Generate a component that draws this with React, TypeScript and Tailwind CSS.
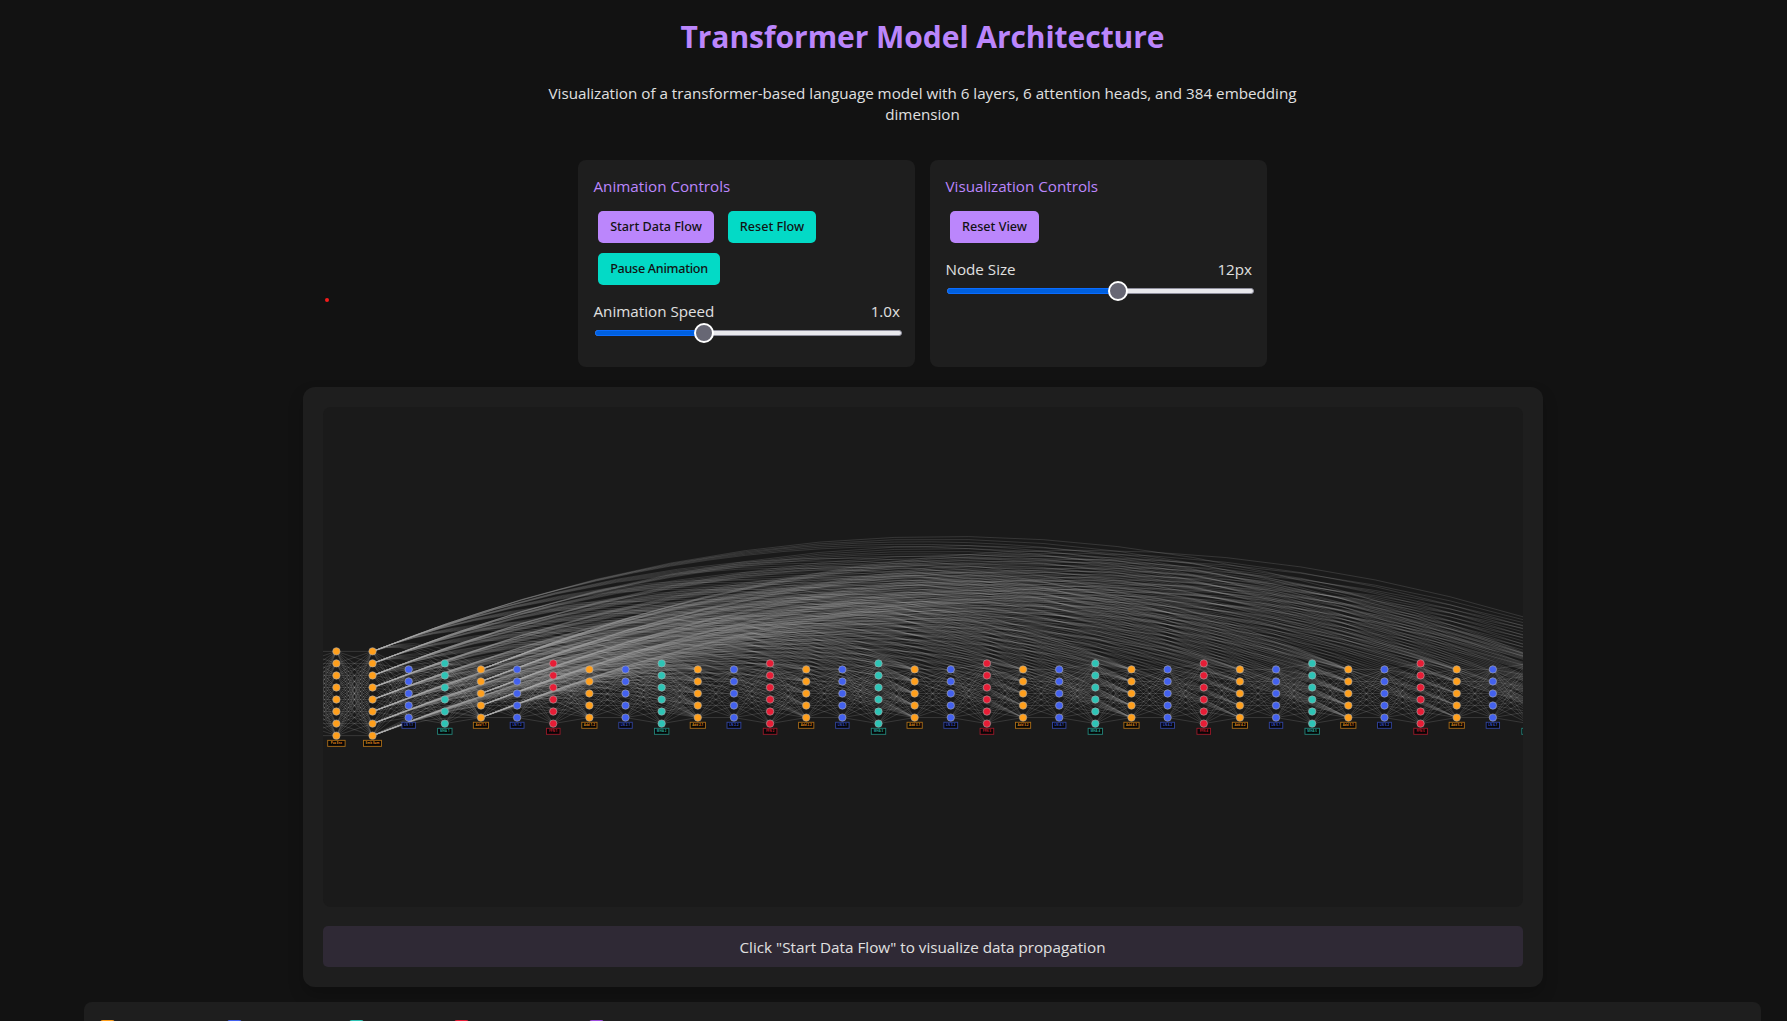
import React from "react";

type Kind = "embed" | "norm" | "attn" | "ffn";

interface Column {
  kind: Kind;
  label: string;
  count: number;
  x: number;
  boxWidth: number;
}

const COLORS: Record<Kind, string> = {
  embed: "#ff9f1c",
  norm: "#4361ee",
  attn: "#2ec4b6",
  ffn: "#e71d36",
};

const VIEW_WIDTH = 1200;
const STEP = 36.14;
const ROW = 12.04;
const CENTER = 286.5;
const ARC = 0.2;

function buildColumns(): Column[] {
  const cols: Omit<Column, "x">[] = [
    { kind: "embed", label: "Token Emb", count: 8, boxWidth: 19 },
    { kind: "embed", label: "Pos Enc", count: 8, boxWidth: 17.4 },
    { kind: "embed", label: "Emb Sum", count: 8, boxWidth: 18 },
  ];
  for (let n = 1; n <= 6; n++) {
    cols.push(
      { kind: "norm", label: `LN ${n}-1`, count: 5, boxWidth: 13.4 },
      { kind: "attn", label: `MHA ${n}`, count: 6, boxWidth: 14.4 },
      { kind: "embed", label: `Add ${n}-1`, count: 5, boxWidth: 15.2 },
      { kind: "norm", label: `LN ${n}-2`, count: 5, boxWidth: 13.8 },
      { kind: "ffn", label: `FFN ${n}`, count: 6, boxWidth: 13.6 },
      { kind: "embed", label: `Add ${n}-2`, count: 5, boxWidth: 15.2 },
    );
  }
  return cols.map((c, i) => ({ ...c, x: 13.4 + (i - 1) * STEP }));
}

const columns = buildColumns();

const nodeY = (c: Column, i: number) => CENTER + (i - (c.count - 1) / 2) * ROW;

function pairs(a: Column, b: Column) {
  const out: { x1: number; y1: number; x2: number; y2: number }[] = [];
  for (let i = 0; i < a.count; i++)
    for (let j = 0; j < b.count; j++)
      out.push({ x1: a.x, y1: nodeY(a, i), x2: b.x, y2: nodeY(b, j) });
  return out;
}

const straight = columns.slice(1).flatMap((c, i) => pairs(columns[i], c));

const residual = [0, 1, 2, 3, 4, 5].flatMap((n) => [
  ...pairs(columns[2], columns[5 + n * 6]),
  ...pairs(columns[5], columns[8 + n * 6]),
]);

const visible = columns.filter((c) => c.x > 0 && c.x - c.boxWidth / 2 < VIEW_WIDTH);

function Network() {
  return (
    <svg width="1200" height="500" viewBox="0 0 1200 500" className="block">
      <g fill="none" stroke="#aaaaaa" strokeWidth="0.6" strokeOpacity="0.35">
        {straight.map((e, i) => (
          <path key={i} d={`M${e.x1} ${e.y1}L${e.x2} ${e.y2}`} />
        ))}
      </g>
      <g fill="none" stroke="#aaaaaa" strokeWidth="0.65" strokeOpacity="0.3">
        {residual.map((e, i) => {
          const cx = (e.x1 + e.x2) / 2;
          const cy = e.y1 - (e.x2 - e.x1) * ARC;
          return <path key={i} d={`M${e.x1} ${e.y1}Q${cx} ${cy} ${e.x2} ${e.y2}`} />;
        })}
      </g>
      {visible.map((c) => {
        const labelY = nodeY(c, c.count - 1) + 7.7;
        return (
          <g key={c.label}>
            {Array.from({ length: c.count }, (_, i) => (
              <circle key={i} cx={c.x} cy={nodeY(c, i)} r="3.7" fill={COLORS[c.kind]} stroke="#aaaaaa" strokeWidth="0.6" />
            ))}
            <rect
              x={c.x - c.boxWidth / 2}
              y={labelY - 3}
              width={c.boxWidth}
              height="6"
              fill="#060606"
              stroke={COLORS[c.kind]}
              strokeOpacity="0.65"
              strokeWidth="0.9"
            />
            {c.x < VIEW_WIDTH && (
              <text
                x={c.x}
                y={labelY + 1}
                textAnchor="middle"
                fontSize="3"
                fontWeight="700"
                fill={COLORS[c.kind]}
                fillOpacity="0.85"
                className="font-['Open_Sans',sans-serif]"
              >
                {c.label}
              </text>
            )}
          </g>
        );
      })}
    </svg>
  );
}

function Button({ children, tone }: { children: React.ReactNode; tone: string }) {
  return (
    <button
      className={`flex h-8 items-center justify-center rounded-[5px] pt-px font-['Noto_Sans','Open_Sans',sans-serif] text-[12.6px] font-medium whitespace-nowrap text-[#121212] ${tone}`}
    >
      {children}
    </button>
  );
}

function Slider({ label, value, percent }: { label: string; value: string; percent: number }) {
  return (
    <div>
      <div className="flex h-[22px] items-center justify-between pt-px pl-[0.5px] text-[15.2px]">
        <span>{label}</span>
        <span>{value}</span>
      </div>
      <div className="relative mt-2 -mr-0.5 ml-0.5 h-1.5 rounded-[3px] border border-[#8f8f9d] bg-[#e9e9ed]">
        <div
          className="absolute -top-px -left-px h-1.5 rounded-l-[3px] border border-[#0a6cff] bg-[#0060df]"
          style={{ width: `${percent}%` }}
        />
        <div
          className="absolute top-1/2 size-5 -translate-x-1/2 -translate-y-1/2 rounded-full border-2 border-white bg-[#676774]"
          style={{ left: `${percent}%` }}
        />
      </div>
    </div>
  );
}

const legend = [
  "ml-0 bg-[#ff9f1c]",
  "ml-[112.5px] bg-[#4361ee]",
  "ml-[107px] bg-[#2ec4b6]",
  "ml-[90px] bg-[#e71d36]",
  "ml-[120px] bg-[#9d4edd]",
];

export default function App() {
  return (
    <div className="relative h-[1021px] w-full overflow-hidden bg-[#121212] pr-[26px] pl-[84px] font-['Open_Sans','Noto_Sans',sans-serif] text-[#e0e0e0]">
      <div className="absolute top-[298px] left-[325px] size-1 rounded-full bg-[#f51b1b]" />
      <div className="flex flex-col items-center">
        <h1 className="mt-[14px] h-[46px] text-[30px] leading-[46px] font-bold tracking-[-0.05px] whitespace-nowrap text-[#bb86fc]">
          Transformer Model Architecture
        </h1>
        <p className="mt-[23px] text-center text-[15.2px] leading-[21px]">
          Visualization of a transformer-based language model with 6 layers, 6 attention heads, and 384 embedding
          <br />
          dimension
        </p>

        <div className="mt-[35px] flex gap-[15px]">
          <section className="h-[207px] w-[337px] rounded-lg bg-[#1e1e1e] px-[15px] pt-[15px]">
            <h3 className="h-[22px] pl-[0.5px] text-[15.2px] leading-[22px] text-[#bb86fc]">Animation Controls</h3>
            <div className="mt-[14px] flex flex-wrap gap-x-[14px] gap-y-2.5 pl-[5px]">
              <Button tone="w-[116px] bg-[#bb86fc]">Start Data Flow</Button>
              <Button tone="w-[88px] bg-[#03dac6]">Reset Flow</Button>
              <Button tone="w-[122px] bg-[#03dac6] tracking-[-0.28px]">Pause Animation</Button>
            </div>
            <div className="mt-[15px]">
              <Slider label="Animation Speed" value="1.0x" percent={35.5} />
            </div>
          </section>
          <section className="h-[207px] w-[337px] rounded-lg bg-[#1e1e1e] px-[15px] pt-[15px]">
            <h3 className="h-[22px] pl-[0.5px] text-[15.2px] leading-[22px] text-[#bb86fc]">Visualization Controls</h3>
            <div className="mt-[14px] flex pl-[5px]">
              <Button tone="w-[89px] bg-[#bb86fc]">Reset View</Button>
            </div>
            <div className="mt-[15px]">
              <Slider label="Node Size" value="12px" percent={55.6} />
            </div>
          </section>
        </div>

        <main className="mt-5 h-[600px] w-[1240px] rounded-xl bg-[#1e1e1e] p-5 shadow-[0_8px_16px_rgba(0,0,0,0.2)]">
          <div className="h-[500px] overflow-hidden rounded-lg bg-[#1a1a1a]">
            <Network />
          </div>
          <div className="mt-[19px] flex h-[41px] items-center justify-center rounded-[5px] bg-[#2f2935] pt-0.5 text-[15.25px]">
            Click "Start Data Flow" to visualize data propagation
          </div>
        </main>

        <footer className="mt-[15px] flex h-12 w-full rounded-lg bg-[#1e1e1e] px-[15.5px] pt-[18px]">
          {legend.map((tone) => (
            <span key={tone} className={`size-[15px] rounded-[3px] ${tone}`} />
          ))}
        </footer>
      </div>
    </div>
  );
}
